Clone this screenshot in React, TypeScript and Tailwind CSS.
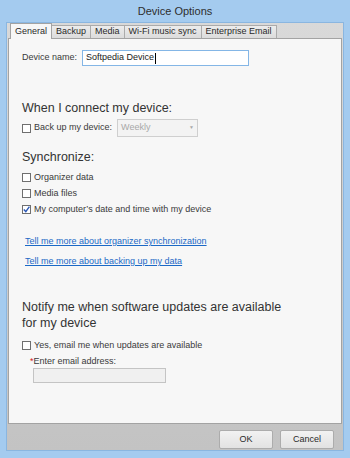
import React from "react";

const font = { fontFamily: '"Liberation Sans", Arial, sans-serif' };

function Box({ checked }: { checked?: boolean }) {
  return (
    <span className="relative inline-block w-[9px] h-[9px] border border-[#6f6f6f] bg-white shrink-0">
      {checked && (
        <svg className="absolute left-0 top-0" width="7" height="7" viewBox="0 0 7 7">
          <path d="M0.8 3.6 L2.8 5.6 L6.4 0.6" stroke="#2b58b6" strokeWidth="1.4" fill="none" />
        </svg>
      )}
    </span>
  );
}

function Check({ label, checked }: { label: string; checked?: boolean }) {
  return (
    <div className="flex items-center gap-[3px] h-[15px]">
      <Box checked={checked} />
      <span className="text-[9px] text-[#3a3a3a]">{label}</span>
    </div>
  );
}

export default function App() {
  const tabs = ["Backup", "Media", "Wi-Fi music sync", "Enterprise Email"];
  return (
    <div className="w-[350px] h-[458px] bg-[#a4cbef] flex flex-col" style={font}>
      <div className="h-[22px] flex items-center justify-center text-[11px] text-[#2e2e2e]">Device Options</div>
      <div className="flex-1 mx-[6px] mb-[7px] border border-[#8ab6e0] bg-gradient-to-b from-[#d9d9d9] to-[#c3c3c3] flex flex-col px-[1px]">
        <div className="flex items-end h-[15px] pl-[2px]">
          <div className="h-[16px] -mb-[1px] relative z-10 px-[4px] bg-[#f7f7f7] border border-b-0 border-[#a3a3a3] flex items-center text-[9px] text-[#2a2a2a]">General</div>
          {tabs.map((t) => (
            <div key={t} className="h-[13px] px-[4px] bg-gradient-to-b from-[#ececec] to-[#dcdcdc] border border-l-0 border-b-0 border-[#ababab] flex items-center text-[9px] text-[#2a2a2a]">{t}</div>
          ))}
        </div>
        <div className="h-[386px] bg-[#f7f7f7] border border-[#a3a3a3] px-[13px] pt-[11px] text-[#3a3a3a]">
          <div className="flex items-center gap-[5px] h-[16px]">
            <span className="text-[9px]">Device name:</span>
            <div className="w-[167px] h-[16px] border border-[#84b6e6] bg-white flex items-center pl-[3px] text-[9px] text-[#1a1a1a]">
              Softpedia Device<span className="inline-block w-[1px] h-[11px] bg-black ml-[1px]" />
            </div>
          </div>
          <div className="mt-[33px] text-[12.5px] text-[#333] leading-[18px]">When I connect my device:</div>
          <div className="mt-[2px] flex items-center gap-[3px] h-[18px]">
            <Box />
            <span className="text-[9px]">Back up my device:</span>
            <div className="ml-[2px] w-[81px] h-[18px] border border-[#cfcfcf] bg-[#f3f3f3] flex items-center justify-between px-[3px] text-[9px] text-[#a8a8a8]">
              Weekly<span className="text-[5px]">▼</span>
            </div>
          </div>
          <div className="mt-[11px] text-[12.5px] text-[#333] leading-[18px]">Synchronize:</div>
          <div className="mt-[4px] flex flex-col gap-[1px]">
            <Check label="Organizer data" />
            <Check label="Media files" />
            <Check label="My computer’s date and time with my device" checked />
          </div>
          <div className="mt-[18px] pl-[3px] text-[9px] text-[#1b69c6] underline leading-[12px]">Tell me more about organizer synchronization</div>
          <div className="mt-[8px] pl-[3px] text-[9px] text-[#1b69c6] underline leading-[12px]">Tell me more about backing up my data</div>
          <div className="mt-[32px] text-[12.5px] text-[#333] leading-[16px]">Notify me when software updates are available<br />for my device</div>
          <div className="mt-[7px]">
            <Check label="Yes, email me when updates are available" />
          </div>
          <div className="mt-[2px] pl-[8px] text-[9px] leading-[12px]"><span className="text-[#d0201a]">*</span>Enter email address:</div>
          <div className="mt-[1px] ml-[11px] w-[133px] h-[15px] border border-[#c4c4c4] bg-[#f0f0f0]" />
        </div>
        <div className="flex justify-end gap-[7px] pr-[8px] pt-[6px]">
          <div className="w-[54px] h-[19px] border border-[#acacac] rounded-[2px] bg-gradient-to-b from-[#f2f2f2] to-[#e2e2e2] flex items-center justify-center text-[9px] text-[#2a2a2a]">OK</div>
          <div className="w-[54px] h-[19px] border border-[#acacac] rounded-[2px] bg-gradient-to-b from-[#f2f2f2] to-[#e2e2e2] flex items-center justify-center text-[9px] text-[#2a2a2a]">Cancel</div>
        </div>
      </div>
    </div>
  );
}
